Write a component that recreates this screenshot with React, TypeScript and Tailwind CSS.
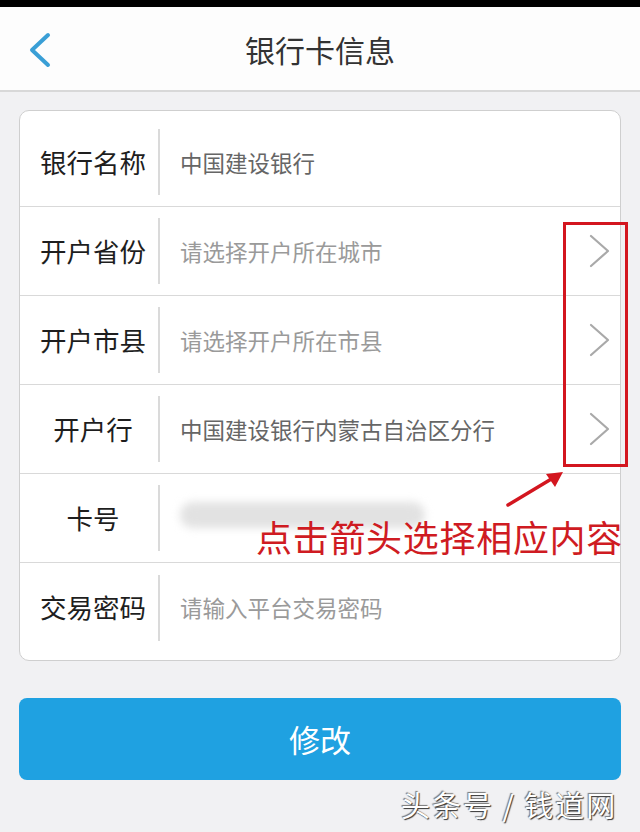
type Row = {
  label: string
  value?: string
  placeholder?: boolean
  arrow?: boolean
  blurred?: boolean
}

const rows: Row[] = [
  { label: "银行名称", value: "中国建设银行" },
  { label: "开户省份", value: "请选择开户所在城市", placeholder: true, arrow: true },
  { label: "开户市县", value: "请选择开户所在市县", placeholder: true, arrow: true },
  { label: "开户行", value: "中国建设银行内蒙古自治区分行", arrow: true },
  { label: "卡号", blurred: true },
  { label: "交易密码", value: "请输入平台交易密码", placeholder: true },
]

const font = { fontFamily: '"Noto Sans CJK SC", "Noto Sans", sans-serif' }

function Chevron() {
  return (
    <svg className="mr-[9px]" width="22" height="34" viewBox="0 0 22 34" fill="none">
      <path d="M2 2 L19 17 L2 32" stroke="#a9a9a9" strokeWidth="2.2" strokeLinecap="round" strokeLinejoin="round" />
    </svg>
  )
}

export default function App() {
  return (
    <div
      className="relative w-[640px] h-[832px] overflow-hidden bg-[#f1f1f3] flex flex-col"
      style={font}
    >
      {/* status bar strip */}
      <div className="h-[7px] bg-black" />

      {/* header */}
      <div className="relative h-[85px] bg-[#fdfdfd] border-b-2 border-[#d8d8d8] flex items-center justify-center">
        <svg
          className="absolute left-[27px] top-[25px]"
          width="26"
          height="36"
          viewBox="0 0 26 36"
          fill="none"
        >
          <path d="M21 3 L5 18 L21 33" stroke="#3a9fd6" strokeWidth="4" strokeLinecap="round" strokeLinejoin="round" />
        </svg>
        <span className="text-[30px] text-[#333] leading-none">银行卡信息</span>
      </div>

      <div className="px-[19px] pt-[18px]">
        {/* form card */}
        <div className="rounded-[10px] border border-[#cfcfcf] bg-white pt-[7px] pb-[8px]">
          {rows.map((row, i) => (
            <div
              key={row.label}
              className={`h-[89px] flex items-center ${i < rows.length - 1 ? "border-b border-[#d9d9d9]" : ""}`}
            >
              <div className="ml-[11px] w-[124px] text-center text-[26.5px] text-[#1e1e1e] leading-none whitespace-nowrap">
                {row.label}
              </div>
              <div className="ml-[3px] w-[2px] h-[66px] bg-[#dadada]" />
              <div className="ml-[20px] flex-1 flex items-center">
                {row.blurred ? (
                  <div className="w-[245px] h-[26px] -mt-[6px] rounded-full bg-[#e2e2e2] blur-[4px]" />
                ) : (
                  <span
                    className={`text-[22.5px] leading-none ${row.placeholder ? "text-[#9a9a9a]" : "text-[#666]"}`}
                  >
                    {row.value}
                  </span>
                )}
              </div>
              {row.arrow && <Chevron />}
            </div>
          ))}
        </div>

        {/* submit */}
        <button className="mt-[37px] w-full h-[82px] rounded-[8px] bg-[#1fa1e1] text-white text-[31px] flex items-center justify-center">
          修改
        </button>
      </div>

      {/* annotation overlay */}
      <div className="absolute left-[563px] top-[222px] w-[65px] h-[245px] border-[3px] border-[#d3161f]" />
      <svg className="absolute left-[500px] top-[465px]" width="70" height="50" viewBox="0 0 70 50">
        <line x1="8" y1="40" x2="58" y2="10" stroke="#d3161f" strokeWidth="3.5" strokeLinecap="round" />
        <path d="M63 7 L46 9 L55 22 Z" fill="#d3161f" />
      </svg>
      <div className="absolute left-[256px] top-[518px] text-[36px] tracking-[0.7px] leading-none text-[#cf1b22] whitespace-nowrap">
        点击箭头选择相应内容
      </div>

      {/* watermark */}
      <div className="absolute left-[401px] top-[790px] text-[29px] tracking-[2px] leading-none text-white whitespace-nowrap [text-shadow:1px_1px_1px_#333,-1px_-1px_1px_#777]">
        头条号 / 钱道网
      </div>
    </div>
  )
}
